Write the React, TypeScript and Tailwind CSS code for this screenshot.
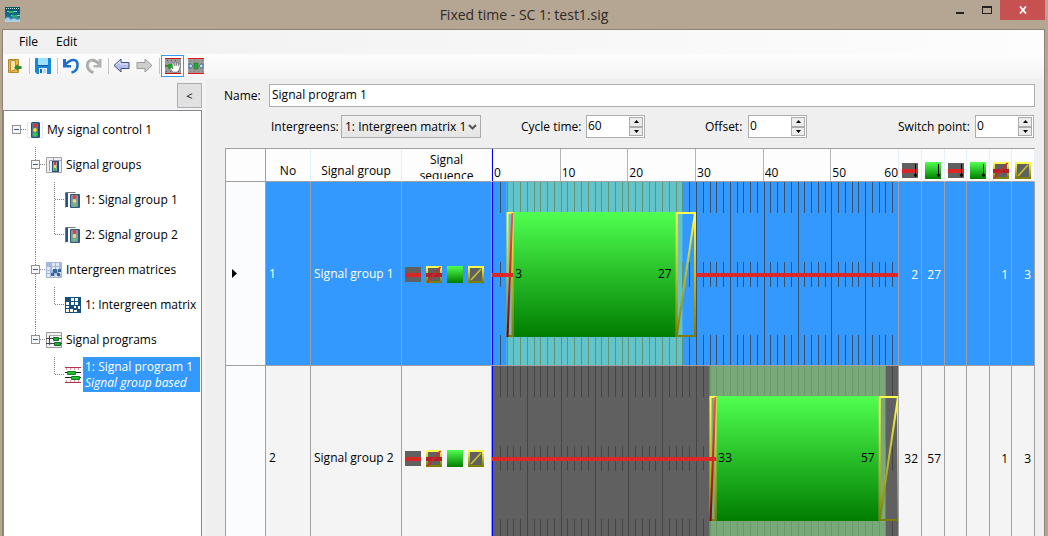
import React, { ReactNode } from "react";

type Phase = "red" | "redAmber" | "green" | "amber";

interface SignalGroup {
  no: number;
  name: string;
  greenStart: number;
  greenEnd: number;
  times: (number | null)[];
  selected?: boolean;
}

const CYCLE = 60;
const SEQUENCE: Phase[] = ["red", "redAmber", "green", "amber"];

const groups: SignalGroup[] = [
  { no: 1, name: "Signal group 1", greenStart: 3, greenEnd: 27, times: [2, 27, null, null, 1, 3], selected: true },
  { no: 2, name: "Signal group 2", greenStart: 33, greenEnd: 57, times: [32, 57, null, null, 1, 3] },
];

export default function App() {
  return (
    <div className="flex h-screen flex-col overflow-hidden bg-[#b5a593] font-['Open_Sans','Noto_Sans',sans-serif] text-[12px] leading-4 text-black">
      <TitleBar />
      <div className="mr-[3px] ml-[2px] flex min-h-0 flex-1 flex-col border border-b-0 border-[#8f8175] bg-[#efefef]">
        <MenuBar />
        <Toolbar />
        <div className="flex min-h-0 flex-1">
          <Sidebar />
          <main className="flex min-w-0 flex-1 flex-col pt-[5px] pr-[9px] pl-[17px]">
            <ProgramForm />
            <SignalTable />
          </main>
        </div>
      </div>
    </div>
  );
}

function TitleBar() {
  return (
    <header className="grid h-[29px] shrink-0 grid-cols-[1fr_auto_1fr] items-start">
      <svg width="16" height="16" viewBox="0 0 16 16" className="mt-[7px] ml-[5px]">
        <defs>
          <linearGradient id="app" x1="0" y1="0" x2="0" y2="1">
            <stop offset="0" stopColor="#0b5560" />
            <stop offset="0.6" stopColor="#176c95" />
            <stop offset="1" stopColor="#7db4d8" />
          </linearGradient>
        </defs>
        <path d="M0 0h15v15H0z" fill="url(#app)" />
        <path d="M1 1.5h14" stroke="#c9e4e4" strokeDasharray="1 1" />
        <path d="M2 4.500h10M6 8.500h9" stroke="#9fc8d0" />
        <path d="M4 4h5v2H4zM7 8h5v2H7z" fill="#22b455" />
        <path d="M0 12l3-2 3 3 3-2 3 2 3-1v3H0z" fill="#b8dcf0" opacity=".8" />
      </svg>
      <h1 className="mt-[5px] text-[14px] leading-5 text-[#2d2a27]">Fixed time - SC 1: test1.sig</h1>
      <div className="mr-[3px] flex justify-end">
        <button aria-label="Minimize" className="flex h-[20px] w-[27px] items-center justify-center">
          <svg width="12" height="12"><path d="M2 8h8v2H2z" fill="#222" /></svg>
        </button>
        <button aria-label="Maximize" className="flex h-[20px] w-[27px] items-center justify-center">
          <svg width="10" height="8"><path d="M0 0h10v2H0zM0 7h10v1H0zM0 0h1v8H0zM9 0h1v8H9z" fill="#222" /></svg>
        </button>
        <button aria-label="Close" className="flex h-[20px] w-[45px] items-center justify-center bg-[#c75050]">
          <svg width="8" height="8"><path d="M1 .5l6 7M7 .5l-6 7" stroke="#fff" strokeWidth="1.8" /></svg>
        </button>
      </div>
    </header>
  );
}

function MenuBar() {
  return (
    <nav className="flex h-[24px] shrink-0 items-center bg-linear-to-r from-[#f0f0f0] to-[#fdfdfd] pl-2">
      <button className="w-[37px] pl-2 text-left">File</button>
      <button className="w-[37px] pl-2 text-left">Edit</button>
    </nav>
  );
}

function Separator() {
  return <span className="mr-px ml-[3px] h-4 w-px shrink-0 bg-[#c4c4c4]" />;
}

function Tool({ label, active, children }: { label: string; active?: boolean; children: ReactNode }) {
  return (
    <button
      aria-label={label}
      aria-pressed={active}
      className={`flex h-[22px] w-[23px] items-center justify-center ${active ? "border border-[#3399ff] bg-white" : ""}`}
    >
      {children}
    </button>
  );
}

function Toolbar() {
  return (
    <div className="flex h-[25px] shrink-0 items-center bg-linear-to-b from-[#fdfdfd] to-[#f4f4f4] pb-[2px]">
      <Tool label="Exit">
        <svg width="16" height="16" viewBox="0 0 16 16">
          <path d="M1.500 1.500h10v13h-10z" fill="#e9b949" stroke="#b5892c" />
          <path d="M3.500 2.500h5v9l-5 2z" fill="#f8e5a8" stroke="#b98e2f" />
          <path d="M7 9.500L11 6v2h3.500v3H11v2z" fill="#2e8b30" />
        </svg>
      </Tool>
      <Separator />
      <Tool label="Save">
        <svg width="16" height="16" viewBox="0 0 16 16">
          <path d="M0 1q0-1 1-1h14q1 0 1 1v15H2l-2-2z" fill="#1785d8" />
          <path d="M3 0h10v7H3z" fill="#9ce1f9" />
          <path d="M3 7h10v1H3z" fill="#0c5fa8" />
          <path d="M4 10h8v6H4z" fill="#e8f1f8" />
          <path d="M5 11h2v4H5z" fill="#1668ab" />
          <path d="M8 12h3M8 14h3" stroke="#8cb9dd" />
        </svg>
      </Tool>
      <Separator />
      <Tool label="Undo">
        <svg width="18" height="17" viewBox="0 0 18 17">
          <path d="M3.500 7.500Q8 2.500 12 3t3.500 6-6 6.500" fill="none" stroke="#1c6fcb" strokeWidth="2.600" />
          <path d="M1 2v8.500h8V8H4V2z" fill="#1c6fcb" />
        </svg>
      </Tool>
      <Tool label="Redo">
        <svg width="18" height="17" viewBox="0 0 18 17">
          <path d="M14.500 7.500Q10 2.500 6 3.500t-3.500 5.500 6 6.500" fill="none" stroke="#aaa" strokeWidth="3" />
          <path d="M6.500 3.800Q3.500 5 4 9t4 5" fill="none" stroke="#ddd" />
          <path d="M16.500 2v8.500h-8V8h5V2z" fill="#b3b3b3" />
        </svg>
      </Tool>
      <Separator />
      <Tool label="Back">
        <svg width="17" height="15" viewBox="0 0 17 15">
          <path d="M1 7.500L8 1v3.500h8v6H8V14z" fill="#b3bdec" stroke="#3c4d87" />
          <path d="M3 7l4-4v3h8" fill="none" stroke="#e4e8fb" />
        </svg>
      </Tool>
      <Tool label="Forward">
        <svg width="17" height="15" viewBox="0 0 17 15">
          <path d="M16 7.500L9 1v3.500H1v6h8V14z" fill="#cecece" stroke="#999" />
        </svg>
      </Tool>
      <Separator />
      <Tool label="Edit signal groups" active>
        <svg width="16" height="16" viewBox="0 0 16 16">
          <path d="M0 0h16v16H0z" fill="#9b9b9b" />
          <path d="M0 .5h16M0 15.500h16" stroke="#c81414" />
          <path d="M2 2.500h12M1 13.500h14" stroke="#555" strokeDasharray="1 3" />
          <path d="M0 8h3" stroke="#333" />
          <path d="M3 6h6v5H3z" fill="#1fa021" />
          <path d="M8 14l-3-4 1.500-.5L8 11 7 5l1.200-.5L9.500 8V4h1.300L11 8l1.200-3.500 1.200.5L13 8l1.500-2 1 .5L14 12l-1.500 2z" fill="#fff" stroke="#444" strokeWidth=".4" />
        </svg>
      </Tool>
      <Tool label="Edit stages">
        <svg width="16" height="16" viewBox="0 0 16 16">
          <path d="M0 0h16v16H0z" fill="#9b9b9b" />
          <path d="M0 .5h16M0 15.500h16" stroke="#ee1212" />
          <path d="M2 2.500h13M2 13.500h13" stroke="#777" strokeDasharray="1 3" />
          <path d="M6 5h4v6H6z" fill="#23ad26" stroke="#23682b" strokeWidth=".6" />
          <path d="M0 7h2V5l3 3-3 3V9H0zM16 7h-2V5l-3 3 3 3V9h2z" fill="#b8d9f6" stroke="#315f91" strokeWidth=".7" />
        </svg>
      </Tool>
    </div>
  );
}

type Guide = "blank" | "root" | "node" | "lastNode" | "line" | "elbow" | "lastElbow";

function GuideCell({ kind }: { kind: Guide }) {
  const boxed = kind === "root" || kind === "node" || kind === "lastNode";
  const elbow = kind === "elbow" || kind === "lastElbow";
  const full = kind === "node" || kind === "line" || kind === "elbow";
  const half = kind === "lastNode" || kind === "lastElbow";
  return (
    <svg width="19" height="35" viewBox="0 0 19 35" className="shrink-0" shapeRendering="crispEdges">
      {full && <path d="M9.500 0V35" stroke="#808080" strokeDasharray="1 1" />}
      {half && <path d="M9.500 0V18" stroke="#808080" strokeDasharray="1 1" />}
      {(boxed || elbow) && <path d="M10 17.500h9" stroke="#808080" strokeDasharray="1 1" />}
      {boxed && (
        <>
          <path d="M5.500 13.500h8v8h-8z" fill="#f6f6f6" stroke="#919191" />
          <path d="M7 17.500h5" stroke="#3c5ba0" />
        </>
      )}
    </svg>
  );
}

function TreeRow({ guides, icon, label, note }: { guides: Guide[]; icon: ReactNode; label: string; note?: string }) {
  return (
    <li className="flex h-[35px] items-center">
      {guides.map((kind, idx) => (
        <GuideCell kind={kind} key={idx} />
      ))}
      <span className="ml-px shrink-0">{icon}</span>
      {note ? (
        <span className="mr-px ml-[2px] flex h-[35px] flex-1 flex-col justify-center bg-[#3399ff] pl-[2px] whitespace-nowrap text-white">
          <span>{label}</span>
          <em>{note}</em>
        </span>
      ) : (
        <span className="ml-[4px] whitespace-nowrap">{label}</span>
      )}
    </li>
  );
}

function Sidebar() {
  return (
    <aside className="flex w-[203px] shrink-0 flex-col border-r-4 border-[#f3f3f3] bg-[#f3f3f3]">
      <div className="flex h-[31px] shrink-0 justify-end pt-[4px]">
        <button className="h-[25px] w-[25px] border border-[#adadad] bg-[#e1e1e1] text-[11px]">&lt;</button>
      </div>
      <ul className="min-h-0 flex-1 overflow-hidden border border-b-0 border-[#828790] bg-white pt-px pl-[3px]">
        <TreeRow guides={["root"]} icon={<LightIcon />} label="My signal control 1" />
        <TreeRow guides={["blank", "node"]} icon={<GroupsIcon />} label="Signal groups" />
        <TreeRow guides={["blank", "line", "elbow"]} icon={<GroupIcon />} label="1: Signal group 1" />
        <TreeRow guides={["blank", "line", "lastElbow"]} icon={<GroupIcon />} label="2: Signal group 2" />
        <TreeRow guides={["blank", "node"]} icon={<MatrixIcon faded />} label="Intergreen matrices" />
        <TreeRow guides={["blank", "line", "lastElbow"]} icon={<MatrixIcon />} label="1: Intergreen matrix" />
        <TreeRow guides={["blank", "lastNode"]} icon={<ProgramsIcon />} label="Signal programs" />
        <TreeRow
          guides={["blank", "blank", "lastElbow"]}
          icon={<ProgramIcon />}
          label="1: Signal program 1"
          note="Signal group based"
        />
      </ul>
    </aside>
  );
}

function LightIcon() {
  return (
    <svg width="16" height="16" viewBox="0 0 16 16">
      <rect x=".5" y=".5" width="15" height="15" fill="none" stroke="#e3e9fb" />
      <rect x="4" y="0" width="9" height="16" rx="1.500" fill="#1f4f80" />
      <rect x="5" y="1" width="6" height="14" rx="1" fill="#4e7b9d" />
      <circle cx="8" cy="3.500" r="1.900" fill="#f02a1e" />
      <circle cx="8" cy="8" r="1.900" fill="#ffe018" />
      <circle cx="8" cy="12.500" r="1.900" fill="#21dc2c" />
    </svg>
  );
}

function GroupsIcon() {
  return (
    <svg width="16" height="16" viewBox="0 0 16 16">
      <path d="M.5.5h15v15H.5z" fill="#eef0f8" stroke="#a8a0a0" />
      <path d="M3.500 14V3.500h12M7.500 1v3" fill="none" stroke="#a09ea4" />
      <rect x="6" y="4" width="7" height="11" fill="#244f7c" />
      <rect x="7" y="5" width="4" height="9" fill="#9aa8aa" />
      <path d="M8 5h2v3H8z" fill="#ed2c25" />
      <path d="M8 8h2v3H8z" fill="#f1d85a" />
      <path d="M8 11h2v3H8z" fill="#3cba55" />
    </svg>
  );
}

function GroupIcon() {
  return (
    <svg width="16" height="16" viewBox="0 0 16 16">
      <path d="M.5 15.500V.5h10" fill="none" stroke="#77777f" />
      <path d="M1 1h2v14H1z" fill="#285484" />
      <rect x="5" y="2" width="10" height="14" rx="1" fill="#30587f" />
      <rect x="6" y="3" width="7" height="12" rx="1" fill="#8298a5" />
      <circle cx="9.500" cy="5" r="1.900" fill="#ee3a35" />
      <circle cx="9.500" cy="9" r="1.900" fill="#ead868" />
      <circle cx="9.500" cy="12.800" r="1.900" fill="#62c46b" />
    </svg>
  );
}

function MatrixIcon({ faded }: { faded?: boolean }) {
  return (
    <svg width="16" height="16" viewBox="0 0 16 16" shapeRendering="crispEdges">
      <path d="M0 0h16v16H0z" fill={faded ? "#a3b8d8" : "#174f7d"} />
      <path
        d="M6 1h3v3H6zM10 1h3v3h-3zM1 5h3v3H1zM10 5h3v3h-3zM6 5h3v3H6zM1 9h3v2H1zM9 9h2v2H9zM13 9h2v3h-2zM1 12h3v3H1zM5 12h3v3H5zM9 13h3v2H9z"
        fill={faded ? "#dfe8f5" : "#fff"}
      />
      {faded && <path d="M7 7h4v4H7zM12 7h3v3h-3zM11 11h3v3h-3zM5 11h3v3H5z" fill="#356496" />}
    </svg>
  );
}

function ProgramsIcon() {
  return (
    <svg width="16" height="16" viewBox="0 0 16 16">
      <path d="M.5.5h15v15H.5z" fill="#f2f2f5" stroke="#999" />
      <path d="M3 3.500h12" stroke="#aaa" />
      <path d="M0 6.500h16M0 11.500h16M3.500 4v9" stroke="#444" />
      <path d="M7.500 5.500h5v3h-5zM8.500 10.500h6v3h-6z" fill="#1dae32" stroke="#14652a" />
    </svg>
  );
}

function ProgramIcon() {
  return (
    <svg width="16" height="16" viewBox="0 0 16 16">
      <path d="M0 .5h16M0 15.500h16" stroke="#b6324a" />
      <path d="M1 2h15M1 14h15" stroke="#b6324a" strokeDasharray="1 3" />
      <path d="M0 5.500h16M0 10.500h16" stroke="#1d1d1d" />
      <path d="M2.500 4.500h8v3h-8zM6.500 9.500h8v3h-8z" fill="#1cc52d" stroke="#147d22" />
    </svg>
  );
}

function Spinner({ id, value }: { id: string; value: number }) {
  return (
    <div className="flex h-[23px] w-[59px] border border-[#abadb3] bg-white p-px">
      <input id={id} defaultValue={value} className="h-[17px] min-w-0 flex-1 outline-none" />
      <div className="flex w-[14px] flex-col">
        <button aria-label="Increase" className="flex flex-1 items-center justify-center border border-[#acacac] bg-[#ececec]">
          <svg width="5" height="3"><path d="M0 3h5L2.500 0z" /></svg>
        </button>
        <button aria-label="Decrease" className="flex flex-1 items-center justify-center border border-[#acacac] bg-[#ececec]">
          <svg width="5" height="3"><path d="M0 0h5L2.500 3z" /></svg>
        </button>
      </div>
    </div>
  );
}

function ProgramForm() {
  return (
    <form className="pl-px" onSubmit={(event) => event.preventDefault()}>
      <div className="flex items-center">
        <label htmlFor="name" className="w-[45px] shrink-0 whitespace-nowrap">
          Name:
        </label>
        <input
          id="name"
          defaultValue="Signal program 1"
          className="h-[23px] min-w-0 flex-1 border border-[#abadb3] bg-white px-[2px] pb-[2px] outline-none"
        />
      </div>
      <div className="mt-2 flex items-center pl-[47px] whitespace-nowrap">
        <div className="flex w-[210px] items-center justify-between">
          <label htmlFor="intergreens">Intergreens:</label>
          <div className="relative">
            <select
              id="intergreens"
              className="h-[23px] w-[140px] appearance-none border border-[#acacac] bg-linear-to-b from-[#f0f0f0] to-[#e5e5e5] pl-[3px]"
            >
              <option>1: Intergreen matrix 1</option>
            </select>
            <svg width="9" height="7" className="pointer-events-none absolute top-[9px] right-[4px]">
              <path d="M1 1l3.500 3.500L8 1" fill="none" stroke="#555" strokeWidth="2" />
            </svg>
          </div>
        </div>
        <div className="ml-10 flex w-[124px] items-center justify-between">
          <label htmlFor="cycle">Cycle time:</label>
          <Spinner id="cycle" value={CYCLE} />
        </div>
        <div className="ml-[60px] flex w-[102px] items-center justify-between">
          <label htmlFor="offset">Offset:</label>
          <Spinner id="offset" value={0} />
        </div>
        <div className="mr-px ml-auto flex w-[136px] items-center justify-between">
          <label htmlFor="switch">Switch point:</label>
          <Spinner id="switch" value={0} />
        </div>
      </div>
    </form>
  );
}

function PhaseIcon({ phase, arrow }: { phase: Phase; arrow?: boolean }) {
  return (
    <svg width="16" height="17" viewBox="0 0 16 17" className="shrink-0">
      {phase === "green" ? (
        <path d="M0 0h16v17H0z" fill="url(#green)" />
      ) : (
        <path d="M0 1h16v15H0z" fill="#606060" />
      )}
      {(phase === "amber" || phase === "redAmber") && (
        <path d="M1 1h14v15H1z" fill="none" stroke="url(#yellow)" strokeWidth="2" />
      )}
      {phase === "amber" && <path d="M3 14L13 3" stroke="#cfc62c" strokeWidth="1.500" />}
      {(phase === "red" || phase === "redAmber") && <path d="M0 7h16v4H0z" fill={phase === "red" ? "#dc2626" : "#b51f26"} />}
      {phase === "redAmber" && <path d="M1.500 16L14.500 1" stroke="#c92a2a" strokeWidth="1.800" />}
      {arrow && <path d="M13.500 2v13M12 12l1.500 3 1.500-3" fill="none" stroke="#000" />}
    </svg>
  );
}

function SignalTable() {
  const line = "border-r border-b border-[#a0a0a0] p-0";
  const head = "border-r border-b border-r-[#e5eefa] border-b-[#a0a0a0] p-0 align-bottom font-normal";
  const ends: [Phase, boolean][] = [
    ["red", true],
    ["green", true],
    ["red", true],
    ["green", true],
    ["redAmber", false],
    ["amber", false],
  ];

  return (
    <div className="mt-[10px] ml-[2px] min-h-0 flex-1 overflow-hidden border-t border-l border-[#a0a0a0]">
      <svg width="0" height="0" className="absolute">
        <defs>
          <linearGradient id="green" x1="0" y1="0" x2="0" y2="1">
            <stop offset="0" stopColor="#50ff50" />
            <stop offset="1" stopColor="#007d00" />
          </linearGradient>
          <linearGradient id="yellow" x1="0" y1="0" x2="0" y2="1">
            <stop offset="0" stopColor="#ffff50" />
            <stop offset="1" stopColor="#7d7d00" />
          </linearGradient>
          <linearGradient id="red" x1="0" y1="0" x2="0" y2="1">
            <stop offset="0" stopColor="#ff5050" />
            <stop offset="1" stopColor="#7d0000" />
          </linearGradient>
        </defs>
      </svg>
      <table className="w-full table-fixed border-separate border-spacing-0">
        <colgroup>
          <col className="w-[40px]" />
          <col className="w-[45px]" />
          <col className="w-[91px]" />
          <col className="w-[90px]" />
          <col />
          <col className="w-[23px]" />
          <col className="w-[23px]" />
          <col className="w-[22px]" />
          <col className="w-[23px]" />
          <col className="w-[22px]" />
          <col className="w-[23px]" />
        </colgroup>
        <thead className="bg-[#fdfdfd]">
          <tr className="h-[33px]">
            <th className={line} />
            <th className={`${head} pb-[2px]`}>No</th>
            <th className={`${head} pb-[2px]`}>Signal group</th>
            <th className={head}>
              <div className="mb-[2px] h-[27px] overflow-hidden px-4">Signal sequence</div>
            </th>
            <th className={head}>
              <div className="flex h-[32px]">
                {[0, 10, 20, 30, 40, 50].map((second) => (
                  <span
                    key={second}
                    className={`flex flex-1 items-end justify-between border-l pl-px ${second === 0 ? "border-[#0000ff]" : "border-[#b4b4b4]"}`}
                  >
                    <span>{second}</span>
                    {second === 50 && <span>{CYCLE}</span>}
                  </span>
                ))}
              </div>
            </th>
            {ends.map(([phase, arrow], idx) => (
              <th className={`${head} pb-[2px] pl-[3px]`} key={idx}>
                <PhaseIcon phase={phase} arrow={arrow} />
              </th>
            ))}
          </tr>
        </thead>
        <tbody>
          {groups.map((group) => (
            <tr key={group.no} className={group.selected ? "h-[184px] bg-[#3399ff] text-white" : "h-[184px] bg-[#f4f4f4]"}>
              <td className={`${line} bg-[#fafcfe]`}>
                {group.selected && (
                  <svg width="5" height="9" className="ml-[6px]"><path d="M0 0v9l5-4.500z" /></svg>
                )}
              </td>
              <td className={`${line} pl-[3px]`}>{group.no}</td>
              <td className={`${line} pl-[3px] whitespace-nowrap`}>{group.name}</td>
              <td className={line}>
                <div className="flex gap-[5px] pt-px pl-[3px]">
                  {SEQUENCE.map((phase) => (
                    <PhaseIcon phase={phase} key={phase} />
                  ))}
                </div>
              </td>
              <td className={line}>
                <SignalChart group={group} />
              </td>
              {group.times.map((value, idx) => (
                <td className={`${line} pt-[3px] pr-[3px] text-right`} key={idx}>
                  {value}
                </td>
              ))}
            </tr>
          ))}
        </tbody>
      </table>
    </div>
  );
}

// seconds -> chart units, the first unit is taken by the zero line
const at = (second: number) => 1 + (second * 406) / CYCLE;

function SignalChart({ group }: { group: SignalGroup }) {
  const { greenStart, greenEnd, selected } = group;
  const seconds = Array.from({ length: CYCLE - 1 }, (_, i) => i + 1);
  const inBand = (second: number) => second >= greenStart - 1 && second <= greenEnd + 1;
  const amberEnd = greenEnd + 3;

  const tickColor = (second: number) => {
    if (selected) return inBand(second) ? "#5f9474" : "#3a5068";
    return inBand(second) ? "#6a9a6a" : "#454545";
  };

  return (
    <div className="relative h-[183px] text-black">
      <svg width="100%" height="183" viewBox="0 0 406 183" preserveAspectRatio="none" className="block">
        <rect width="406" height="183" fill={selected ? "#3399ff" : "#606060"} />
        <rect
          x={at(greenStart - 1)}
          width={at(greenEnd + 1) - at(greenStart - 1)}
          height="183"
          fill={selected ? "#62c3c8" : "#79a979"}
        />
        {seconds.map((second) => (
          <path
            key={second}
            d={
              second % 5 === 0
                ? `M${Math.round(at(second)) + 0.5} 0v183`
                : `M${Math.round(at(second)) + 0.5} 0v31m0 49v25m0 48v30`
            }
            stroke={tickColor(second)}
          />
        ))}
        <path d="M.5 0v183" stroke="#0000ff" />
        <rect x={at(greenStart)} y="30" width={at(greenEnd) - at(greenStart)} height="125" fill="url(#green)" />
        <rect x={at(greenStart - 1) + 1} y="31" width="5" height="123" fill="none" stroke="url(#yellow)" strokeWidth="2" />
        <path d={`M${at(greenStart - 1) + 1} 155L${at(greenStart) - 1} 31`} stroke="url(#red)" strokeWidth="2" />
        <rect
          x={at(greenEnd) + 1}
          y="31"
          width={at(amberEnd) - at(greenEnd) - 2}
          height="123"
          fill="none"
          stroke="url(#yellow)"
          strokeWidth="2"
        />
        <path d={`M${at(greenEnd) + 1} 154L${at(amberEnd) - 1} 31`} stroke="url(#yellow)" strokeWidth="2" />
        <rect y="91" width={at(greenStart)} height="4" fill="#dc2828" />
        <rect x={at(amberEnd)} y="91" width={at(CYCLE) - at(amberEnd)} height="4" fill="#dc2828" />
      </svg>
      <div
        className="absolute top-[84px] flex justify-between px-[3px]"
        style={{
          left: `${(greenStart / CYCLE) * 100}%`,
          width: `${((greenEnd - greenStart) / CYCLE) * 100}%`,
        }}
      >
        <span>{greenStart}</span>
        <span>{greenEnd}</span>
      </div>
    </div>
  );
}
